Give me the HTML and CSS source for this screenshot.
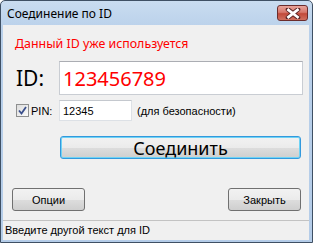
FILE: index.html
```html
<!DOCTYPE html>
<html lang="ru">
<head>
  <meta charset="UTF-8" />
  <title>Соединение по ID</title>
  <link rel="stylesheet" href="styles.css">
</head>
<body>
  <div class="window">
    <div class="titlebar">
      <span class="title">Соединение по ID</span>
      <div class="close">
        <svg width="16" height="11" viewBox="0 0 16 11">
          <path d="M3 1.5 L13 9.5 M13 1.5 L3 9.5" stroke="#5a2424" stroke-width="4.6" fill="none" stroke-linecap="round"/>
          <path d="M3.5 2 L12.5 9 M12.5 2 L3.5 9" stroke="#fff" stroke-width="2.8" fill="none" stroke-linecap="square"/>
        </svg>
      </div>
    </div>

    <div class="client">
      <div class="msg">Данный ID уже используется</div>

      <!-- ID -->
      <div class="id-row">
        <label class="id-label" for="id">ID:</label>
        <input class="id-input" id="id" type="text" value="123456789">
      </div>

      <!-- PIN -->
      <div class="pin-row">
        <span class="check">
          <svg width="13" height="13" viewBox="0 0 13 13">
            <path d="M3 6.5 L5.5 9.5 L10 3" stroke="#3a4f8c" stroke-width="1.8" fill="none"/>
          </svg>
        </span>
        <label class="pin-label" for="pin">PIN:</label>
        <input class="pin-input" id="pin" type="text" value="12345">
        <span class="note">(для безопасности)</span>
      </div>

      <button class="btn connect">Соединить</button>

      <div class="buttons">
        <button class="btn small">Опции</button>
        <button class="btn small">Закрыть</button>
      </div>

      <div class="status">Введите другой текст для ID</div>
    </div>
  </div>
</body>
</html>
```

FILE: styles.css
```css
body {
    margin: 0;
    font-family: "Noto Sans", sans-serif;
}
.window {
    width: 313px;
    height: 243px;
    box-sizing: border-box;
    border: 1px solid #3f5064;
    border-radius: 5px 5px 0 0;
    background: linear-gradient(#c9dcf0, #b9d0ea 30px, #b4cce8);
    display: flex;
    flex-direction: column;
}
.titlebar {
    height: 24px;
    display: flex;
    align-items: center;
    padding-left: 6px;
}
.title {
    font-size: 12px;
    color: #000;
}
.close {
    margin-left: auto;
    margin-right: 4px;
    width: 29px;
    height: 14px;
    border: 1px solid #6b2c2c;
    border-radius: 3px;
    background: linear-gradient(#e8a39a, #d7786c 45%, #c24a3a 55%, #d0705f);
    display: flex;
    align-items: center;
    justify-content: center;
}
.client {
    flex: 1;
    margin: 0 3px 2px 2px;
    background: #f0f0f0;
    display: flex;
    flex-direction: column;
}
.msg {
    margin: 11px 0 0 12px;
    height: 16px;
    line-height: 16px;
    font-size: 12.4px;
    color: #ff0000;
}
.id-row {
    display: flex;
    align-items: center;
    margin: 9px 0 0 13px;
    height: 34px;
}
.id-label {
    width: 43px;
    font-size: 21px;
    color: #000;
}
.id-input {
    width: 244px;
    height: 34px;
    box-sizing: border-box;
    border: 1px solid #c9cdd3;
    border-top-color: #abadb3;
    background: #fff;
    padding: 0 0 0 3px;
    font-family: "Noto Sans", sans-serif;
    font-size: 20px;
    color: #ff0000;
    outline: none;
}
.pin-row {
    display: flex;
    align-items: center;
    margin: 5px 0 0 13px;
    height: 21px;
    font-family: "Liberation Sans", sans-serif;
    font-size: 11px;
    color: #000;
}
.check {
    width: 13px;
    height: 13px;
    box-sizing: border-box;
    border: 1px solid #8e8f8f;
    background: linear-gradient(135deg, #dcdcdc, #fbfbfb);
    display: flex;
}
.check svg {
    margin: -1px;
}
.pin-label {
    margin-left: 2px;
    width: 28px;
}
.pin-input {
    width: 73px;
    height: 21px;
    box-sizing: border-box;
    border: 1px solid #dde1e6;
    border-top-color: #c4c8ce;
    background: #fff;
    padding: 0 0 0 3px;
    font-family: "Liberation Sans", sans-serif;
    font-size: 11px;
    color: #000;
    outline: none;
}
.note {
    margin-left: 5px;
}
.btn {
    box-sizing: border-box;
    height: 23px;
    border: 1px solid #707070;
    border-radius: 3px;
    background: linear-gradient(#f2f2f2, #ebebeb 50%, #dddddd 51%, #cfcfcf);
    color: #000;
    padding: 0;
}
.connect {
    margin: 15px 0 0 57px;
    width: 241px;
    border-color: #3399dd;
    box-shadow: inset 0 0 0 1px #6fd3f5;
    font-family: "Noto Sans", sans-serif;
    font-size: 18px;
    line-height: 20px;
}
.buttons {
    display: flex;
    justify-content: space-between;
    margin-top: 29px;
    padding: 0 8px 0 9px;
}
.small {
    width: 73px;
    font-family: "Liberation Sans", sans-serif;
    font-size: 11px;
}
.status {
    margin-top: auto;
    height: 19px;
    border-top: 1px solid #c3c3c3;
    padding-left: 2px;
    font-family: "Liberation Sans", sans-serif;
    font-size: 11px;
    line-height: 18px;
    color: #000;
}
```
